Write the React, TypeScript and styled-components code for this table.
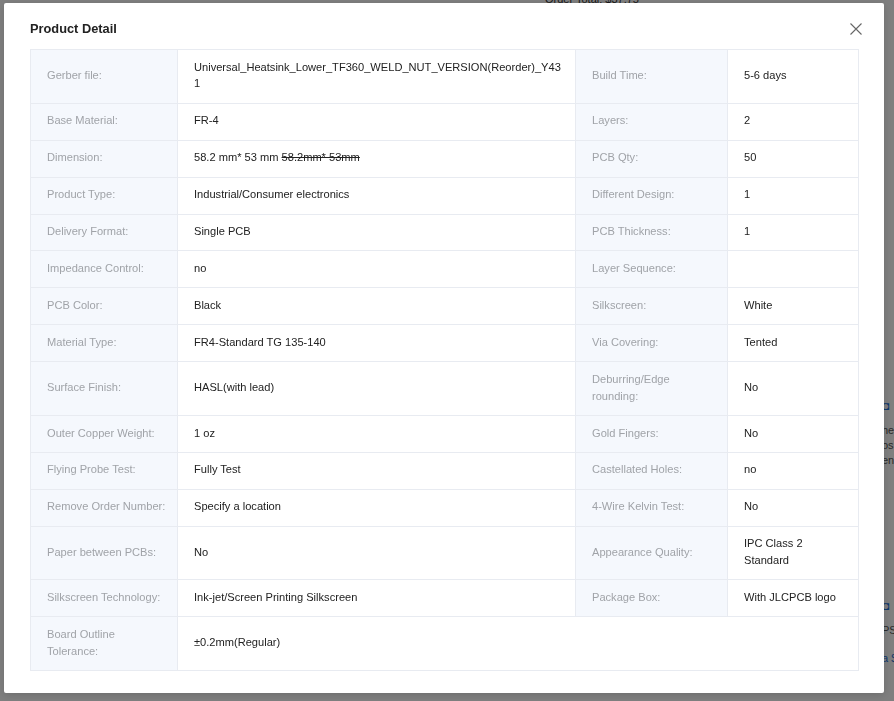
import React from "react";
import styled, { createGlobalStyle } from "styled-components";

const GlobalStyle = createGlobalStyle`
  html, body { margin: 0; padding: 0; }
  body {
    background: #ffffff;
    font-family: "Liberation Sans", Arial, Helvetica, sans-serif;
    color: #222;
  }
  * { box-sizing: border-box; }
`;

const Page = styled.div`
  position: relative;
  width: 894px;
  height: 701px;
  overflow: hidden;
  background: #fff;
`;

const PageTop = styled.div`
  padding: 0 0 0 545px;
  margin-top: -8px;
  font-size: 11px;
  color: #333;
  line-height: 14px;
  white-space: nowrap;
`;

const SideColumn = styled.div`
  display: flex;
  flex-direction: column;
  margin: 393px 0 0 882px;
  font-size: 11px;
  color: #444;
  line-height: 15px;
  white-space: nowrap;
`;

const SideIcon = styled.span<{ $gap?: number }>`
  display: block;
  color: #1f6fd6;
  font-size: 12px;
  line-height: 14px;
  height: 14px;
  margin-top: ${(p) => p.$gap ?? 0}px;
  margin-bottom: 10px;
`;

const SideText = styled.span<{ $blue?: boolean; $gap?: number }>`
  display: block;
  color: ${(p) => (p.$blue ? "#1f6fd6" : "#555")};
  margin-top: ${(p) => p.$gap ?? 0}px;
`;

const Overlay = styled.div`
  position: fixed;
  inset: 0;
  background: rgba(0, 0, 0, 0.5);
  display: flex;
  align-items: flex-start;
  padding: 3px 0 0 4px;
`;

const Modal = styled.div`
  width: 880px;
  height: 690px;
  background: #fff;
  border-radius: 2px;
  padding: 0 26px 22px 26px;
  display: flex;
  flex-direction: column;
  box-shadow: 0 2px 8px rgba(0, 0, 0, 0.15);
`;

const Header = styled.div`
  flex-shrink: 0;
  display: flex;
  align-items: center;
  justify-content: space-between;
  height: 46px;
  padding-top: 5px;
`;

const Title = styled.h3`
  margin: 0;
  font-size: 12.8px;
  font-weight: 700;
  color: #222;
  line-height: 20px;
`;

const CloseButton = styled.button`
  border: 0;
  background: transparent;
  padding: 0;
  margin-right: -5px;
  width: 14px;
  height: 14px;
  display: flex;
  align-items: center;
  justify-content: center;
  cursor: pointer;
  color: #666;
`;

const Table = styled.table`
  flex-shrink: 0;
  width: 828px;
  border-collapse: collapse;
  table-layout: fixed;
  font-size: 11.1px;
  line-height: 16.75px;
  border: 1px solid #e8ebf1;
`;

const Cell = styled.td<{ $label?: boolean }>`
  border: 1px solid #e8ebf1;
  padding: 8.6px ${(p) => (p.$label ? "10px" : "16px")} 10.6px 16px;
  vertical-align: middle;
  background: ${(p) => (p.$label ? "#f5f8fd" : "#fff")};
  color: ${(p) => (p.$label ? "#a0a3a8" : "#222")};
`;

const WideValue = styled(Cell)`
  padding-right: 12px;
  word-break: break-all;
`;

const Struck = styled.span`
  text-decoration: line-through;
`;

type Row = [string, React.ReactNode, string, React.ReactNode];

const rows: Row[] = [
  [
    "Gerber file:",
    "Universal_Heatsink_Lower_TF360_WELD_NUT_VERSION(Reorder)_Y431",
    "Build Time:",
    "5-6 days",
  ],
  ["Base Material:", "FR-4", "Layers:", "2"],
  [
    "Dimension:",
    <>
      58.2 mm* 53 mm <Struck>58.2mm* 53mm</Struck>
    </>,
    "PCB Qty:",
    "50",
  ],
  ["Product Type:", "Industrial/Consumer electronics", "Different Design:", "1"],
  ["Delivery Format:", "Single PCB", "PCB Thickness:", "1"],
  ["Impedance Control:", "no", "Layer Sequence:", ""],
  ["PCB Color:", "Black", "Silkscreen:", "White"],
  ["Material Type:", "FR4-Standard TG 135-140", "Via Covering:", "Tented"],
  ["Surface Finish:", "HASL(with lead)", "Deburring/Edge rounding:", "No"],
  ["Outer Copper Weight:", "1 oz", "Gold Fingers:", "No"],
  ["Flying Probe Test:", "Fully Test", "Castellated Holes:", "no"],
  ["Remove Order Number:", "Specify a location", "4-Wire Kelvin Test:", "No"],
  ["Paper between PCBs:", "No", "Appearance Quality:", "IPC Class 2 Standard"],
  [
    "Silkscreen Technology:",
    "Ink-jet/Screen Printing Silkscreen",
    "Package Box:",
    "With JLCPCB logo",
  ],
];

const CloseIcon = () => (
  <svg width="12" height="12" viewBox="0 0 12 12" fill="none">
    <path d="M0.5 0.5L11.5 11.5M11.5 0.5L0.5 11.5" stroke="#666" strokeWidth="1.1" />
  </svg>
);

export default function App() {
  return (
    <>
      <GlobalStyle />
      <Page>
        <PageTop>Order Total: $37.75</PageTop>
        <SideColumn>
          <SideIcon>◘</SideIcon>
          <SideText>he</SideText>
          <SideText>os</SideText>
          <SideText>en</SideText>
          <SideIcon $gap={131}>◘</SideIcon>
          <SideText>PS</SideText>
          <SideText $blue $gap={13}>a $</SideText>
        </SideColumn>
      </Page>
      <Overlay>
        <Modal>
          <Header>
            <Title>Product Detail</Title>
            <CloseButton aria-label="Close">
              <CloseIcon />
            </CloseButton>
          </Header>
          <Table>
            <colgroup>
              <col style={{ width: 147 }} />
              <col style={{ width: 398 }} />
              <col style={{ width: 152 }} />
              <col style={{ width: 131 }} />
            </colgroup>
            <tbody>
              {rows.map(([l1, v1, l2, v2], i) => (
                <tr key={i}>
                  <Cell $label>{l1}</Cell>
                  <WideValue>{v1}</WideValue>
                  <Cell $label>{l2}</Cell>
                  <Cell>{v2}</Cell>
                </tr>
              ))}
              <tr>
                <Cell $label>Board Outline Tolerance:</Cell>
                <Cell colSpan={3}>±0.2mm(Regular)</Cell>
              </tr>
            </tbody>
          </Table>
        </Modal>
      </Overlay>
    </>
  );
}
